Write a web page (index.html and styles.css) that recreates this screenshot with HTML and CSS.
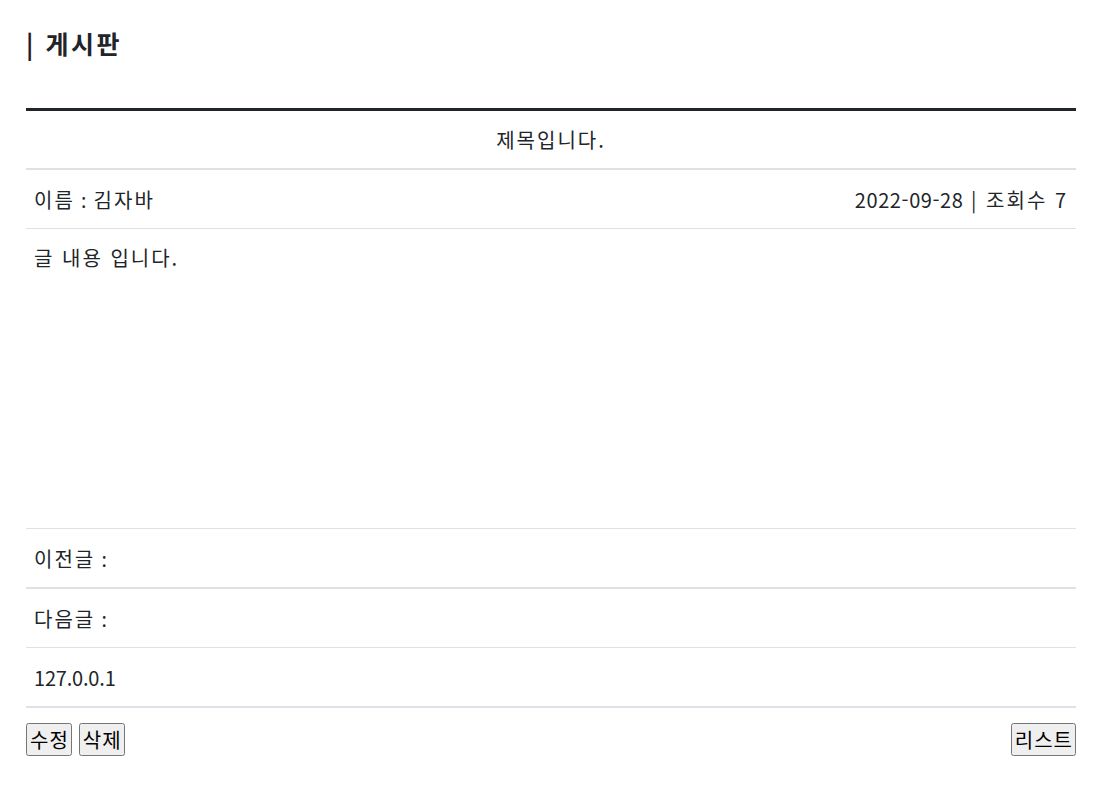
FILE: index.html
```html
<!DOCTYPE html>
<html lang="ko">
<head>
    <meta charset="UTF-8">
    <meta name="viewport" content="width=device-width, initial-scale=1.0">
    <title>게시판</title>
    <link rel="stylesheet" href="styles.css">
</head>
<body>
    <div class="board">
        <h2 class="board-title"><span class="bar">|</span> 게시판</h2>

        <table class="view">
            <tr class="row-title">
                <td colspan="2" class="center">제목입니다.</td>
            </tr>
            <tr>
                <td>이름<span class="colon"> : </span>김자바</td>
                <td class="right"><span class="num">2022-09-28</span> | 조회수 7</td>
            </tr>
            <tr class="row-content">
                <td colspan="2">글 내용 입니다.</td>
            </tr>
            <tr class="thick">
                <td colspan="2">이전글<span class="colon"> :</span></td>
            </tr>
            <tr>
                <td colspan="2">다음글<span class="colon"> :</span></td>
            </tr>
            <tr class="thick">
                <td colspan="2"><span class="ip">127.0.0.1</span></td>
            </tr>
        </table>

        <div class="buttons">
            <div class="left-btns">
                <button type="button">수정</button>
                <button type="button">삭제</button>
            </div>
            <button type="button">리스트</button>
        </div>
    </div>
</body>
</html>
```

FILE: styles.css
```css
body {
    margin: 0;
    font-family: "Noto Sans CJK KR", "Noto Sans", sans-serif;
    color: #212529;
    background: #fff;
}

.board {
    width: 1050px;
    margin-left: 26px;
    padding-top: 26px;
}

.board-title {
    margin: 0 0 48px 0;
    font-size: 25px;
    font-weight: bold;
    line-height: 34px;
    letter-spacing: 2.5px;
}

.board-title .bar {
    color: #2a1a22;
}

.view {
    width: 100%;
    border-collapse: collapse;
    border-top: 3px solid #212529;
    font-size: 20px;
    letter-spacing: 2px;
}

.view td {
    height: 58px;
    padding: 0 8px;
    border-bottom: 1px solid #dee2e6;
    vertical-align: middle;
}

.view .row-title td {
    height: 57px;
    border-bottom: 2px solid #dee2e6;
}

.view .row-content td {
    height: 285px;
    vertical-align: top;
    padding-top: 14px;
}

.view .thick td {
    border-bottom: 2px solid #dee2e6;
}

.colon {
    font-family: "Noto Sans", sans-serif;
    letter-spacing: 1px;
}

.num {
    letter-spacing: 0.6px;
}

.ip {
    letter-spacing: -0.2px;
}

.center {
    text-align: center;
}

.right {
    text-align: right;
}

.buttons {
    display: flex;
    justify-content: space-between;
    margin-top: 15px;
}

.left-btns {
    display: flex;
    gap: 7px;
}

button {
    font-family: "Noto Sans CJK KR", sans-serif;
    font-size: 20px;
    letter-spacing: 1px;
    padding: 0 1px 0 2px;
    height: 33px;
    color: #000;
}
```
